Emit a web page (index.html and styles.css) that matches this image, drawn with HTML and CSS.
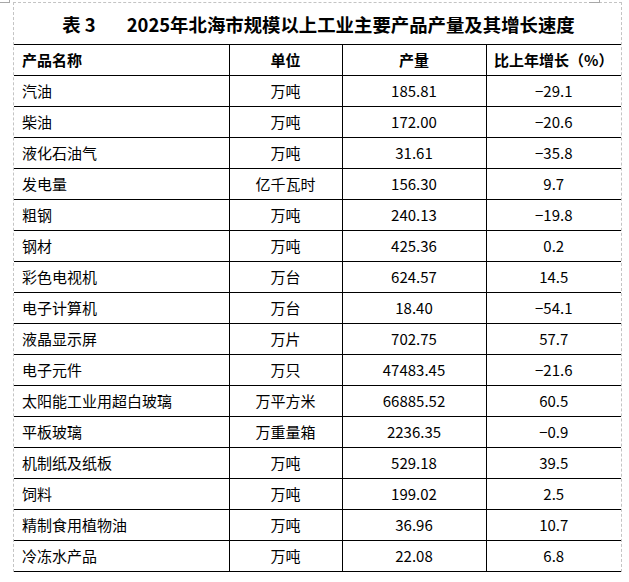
FILE: index.html
```html
<!DOCTYPE html>
<html lang="zh-CN">
<head>
<meta charset="utf-8">
<title>表3 2025年北海市规模以上工业主要产品产量及其增长速度</title>
<link rel="stylesheet" href="styles.css">
</head>
<body>
<div class="mark mark-left"></div>
<div class="mark mark-right"></div>
<div class="frame">
  <div class="title"><span>表 3</span><span class="title-gap"></span><span>2025年北海市规模以上工业主要产品产量及其增长速度</span></div>
  <table class="data">
    <colgroup>
      <col class="c1"><col class="c2"><col class="c3"><col class="c4">
    </colgroup>
    <thead>
      <tr><th class="name">产品名称</th><th>单位</th><th>产量</th><th>比上年增长（%）</th></tr>
    </thead>
    <tbody>
      <tr><td class="name">汽油</td><td>万吨</td><td>185.81</td><td>−29.1</td></tr>
      <tr><td class="name">柴油</td><td>万吨</td><td>172.00</td><td>−20.6</td></tr>
      <tr><td class="name">液化石油气</td><td>万吨</td><td>31.61</td><td>−35.8</td></tr>
      <tr><td class="name">发电量</td><td>亿千瓦时</td><td>156.30</td><td>9.7</td></tr>
      <tr><td class="name">粗钢</td><td>万吨</td><td>240.13</td><td>−19.8</td></tr>
      <tr><td class="name">钢材</td><td>万吨</td><td>425.36</td><td>0.2</td></tr>
      <tr><td class="name">彩色电视机</td><td>万台</td><td>624.57</td><td>14.5</td></tr>
      <tr><td class="name">电子计算机</td><td>万台</td><td>18.40</td><td>−54.1</td></tr>
      <tr><td class="name">液晶显示屏</td><td>万片</td><td>702.75</td><td>57.7</td></tr>
      <tr><td class="name">电子元件</td><td>万只</td><td>47483.45</td><td>−21.6</td></tr>
      <tr><td class="name">太阳能工业用超白玻璃</td><td>万平方米</td><td>66885.52</td><td>60.5</td></tr>
      <tr><td class="name">平板玻璃</td><td>万重量箱</td><td>2236.35</td><td>−0.9</td></tr>
      <tr><td class="name">机制纸及纸板</td><td>万吨</td><td>529.18</td><td>39.5</td></tr>
      <tr><td class="name">饲料</td><td>万吨</td><td>199.02</td><td>2.5</td></tr>
      <tr><td class="name">精制食用植物油</td><td>万吨</td><td>36.96</td><td>10.7</td></tr>
      <tr><td class="name">冷冻水产品</td><td>万吨</td><td>22.08</td><td>6.8</td></tr>
    </tbody>
  </table>
</div>
</body>
</html>
```

FILE: styles.css
```css
html, body {
  margin: 0;
  padding: 0;
  background: #ffffff;
}

body {
  position: relative;
  font-family: "Noto Sans CJK SC", "Noto Sans", sans-serif;
  color: #000000;
}

.mark {
  position: absolute;
  top: 0;
  height: 2px;
  border-bottom: 1px solid #a8a8a8;
  border-right: 1px solid #a8a8a8;
}

.mark-left {
  left: 0;
  width: 9px;
}

.mark-right {
  left: 589px;
  width: 10px;
}

.frame {
  margin: 2px 0 0 13px;
  width: 607px;
  border: 1px dashed #c4c4c4;
  border-bottom: none;
}

.title {
  height: 41px;
  display: flex;
  align-items: center;
  justify-content: center;
  font-size: 18.4px;
  font-weight: bold;
  padding-left: 2px;
}

.title-gap {
  display: inline-block;
  width: 31px;
}

.data {
  width: 607px;
  border-collapse: collapse;
  table-layout: fixed;
  font-size: 15px;
}

.c1 { width: 215px; }
.c2 { width: 113px; }
.c3 { width: 144px; }
.c4 { width: 135px; }

.data tr {
  height: 31px;
}

.data th,
.data td {
  border: 1px solid #000000;
  padding: 0 4px;
  text-align: center;
  vertical-align: middle;
  line-height: 18px;
  white-space: nowrap;
}

.data th {
  font-weight: bold;
}

.data tr > :first-child {
  border-left: none;
}

.data tr > :last-child {
  border-right: none;
}

.data .name {
  text-align: left;
  padding-left: 8px;
}
```
